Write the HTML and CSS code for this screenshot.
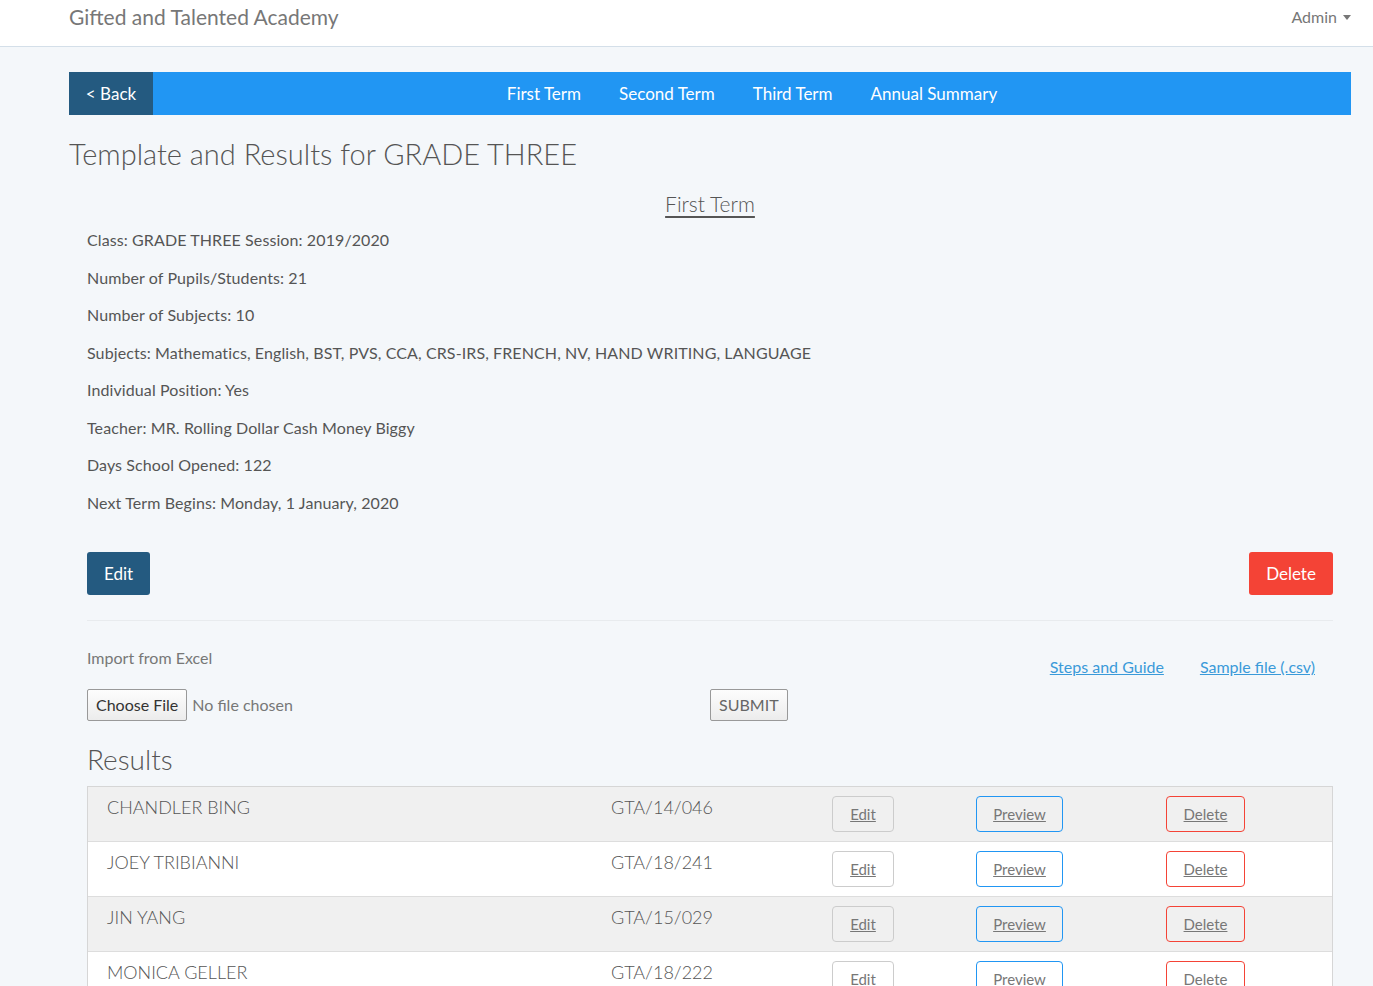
FILE: index.html
```html
<!DOCTYPE html>
<html>
<head>
<meta charset="utf-8">
<link rel="stylesheet" href="styles.css">
</head>
<body>
<header class="navbar">
  <a class="brand">Gifted and Talented Academy</a>
  <a class="user">Admin <span class="caret"></span></a>
</header>
<main class="container">
  <nav class="tabs">
    <a class="back">&lt; Back</a>
    <div class="tab-links">
      <a>First Term</a>
      <a>Second Term</a>
      <a>Third Term</a>
      <a>Annual Summary</a>
    </div>
  </nav>
  <h1 class="title">Template and Results for GRADE THREE</h1>
  <div class="panel">
    <h2 class="term">First Term</h2>
    <ul class="info">
      <li>Class: GRADE THREE Session: 2019/2020</li>
      <li>Number of Pupils/Students: 21</li>
      <li>Number of Subjects: 10</li>
      <li>Subjects: Mathematics, English, BST, PVS, CCA, CRS-IRS, FRENCH, NV, HAND WRITING, LANGUAGE</li>
      <li>Individual Position: Yes</li>
      <li>Teacher: MR. Rolling Dollar Cash Money Biggy</li>
      <li>Days School Opened: 122</li>
      <li>Next Term Begins: Monday, 1 January, 2020</li>
    </ul>
    <div class="actions">
      <button class="btn btn-primary">Edit</button>
      <button class="btn btn-danger">Delete</button>
    </div>
    <hr class="sep">
    <div class="import">
      <div class="import-left">
        <p class="import-label">Import from Excel</p>
        <div class="file-row">
          <span class="file-btn">Choose File</span>
          <span class="file-name">No file chosen</span>
        </div>
      </div>
      <div class="import-mid">
        <span class="submit">SUBMIT</span>
      </div>
      <div class="import-links">
        <a>Steps and Guide</a>
        <a>Sample file (.csv)</a>
      </div>
    </div>
    <h2 class="results-title">Results</h2>
    <div class="table">
      <div class="row alt">
        <div class="cell name">CHANDLER BING</div>
        <div class="cell id">GTA/14/046</div>
        <div class="cell"><span class="obtn obtn-edit">Edit</span></div>
        <div class="cell"><span class="obtn obtn-preview">Preview</span></div>
        <div class="cell"><span class="obtn obtn-delete">Delete</span></div>
      </div>
      <div class="row">
        <div class="cell name">JOEY TRIBIANNI</div>
        <div class="cell id">GTA/18/241</div>
        <div class="cell"><span class="obtn obtn-edit">Edit</span></div>
        <div class="cell"><span class="obtn obtn-preview">Preview</span></div>
        <div class="cell"><span class="obtn obtn-delete">Delete</span></div>
      </div>
      <div class="row alt">
        <div class="cell name">JIN YANG</div>
        <div class="cell id">GTA/15/029</div>
        <div class="cell"><span class="obtn obtn-edit">Edit</span></div>
        <div class="cell"><span class="obtn obtn-preview">Preview</span></div>
        <div class="cell"><span class="obtn obtn-delete">Delete</span></div>
      </div>
      <div class="row">
        <div class="cell name">MONICA GELLER</div>
        <div class="cell id">GTA/18/222</div>
        <div class="cell"><span class="obtn obtn-edit">Edit</span></div>
        <div class="cell"><span class="obtn obtn-preview">Preview</span></div>
        <div class="cell"><span class="obtn obtn-delete">Delete</span></div>
      </div>
    </div>
  </div>
</main>
</body>
</html>
```

FILE: styles.css
```css
* { box-sizing: border-box; }
html, body { margin: 0; padding: 0; }
body {
  background: #f4f7fa;
  font-family: "Lato", "Open Sans", sans-serif;
  color: #555;
  font-size: 16px;
  height: 986px;
  overflow: hidden;
}
a { cursor: pointer; }
.navbar {
  height: 47px;
  background: #fff;
  border-bottom: 1px solid #d4dfe9;
  display: flex;
  align-items: center;
  justify-content: space-between;
  padding: 0 22px 0 69px;
}
.brand {
  font-size: 21px;
  color: #777;
  font-weight: 400;
  margin-top: -14px;
}
.user {
  font-size: 16px;
  color: #777;
  margin-top: -14px;
  display: flex;
  align-items: center;
  gap: 6px;
}
.caret {
  display: inline-block;
  width: 0; height: 0;
  border-left: 4px solid transparent;
  border-right: 4px solid transparent;
  border-top: 5px solid #777;
  margin-top: 2px;
}
.container {
  padding: 25px 22px 0 69px;
}
.tabs {
  height: 43px;
  background: #2196f3;
  display: flex;
  align-items: stretch;
}
.back {
  width: 84px;
  background: #245a80;
  color: #fff;
  display: flex;
  align-items: center;
  justify-content: center;
  font-size: 17px;
}
.tab-links {
  flex: 1;
  display: flex;
  justify-content: center;
  align-items: center;
}
.tab-links a {
  color: #fff;
  font-size: 17px;
  padding: 0 19px;
}
.title {
  font-size: 29px;
  font-weight: 300;
  color: #555;
  margin: 22px 0 0;
  line-height: 34px;
}
.panel {
  padding: 0 18px;
}
.term {
  text-align: center;
  font-size: 21px;
  font-weight: 300;
  color: #555;
  text-decoration: underline;
  text-underline-offset: 4px;
  margin: 18px 0 0;
  line-height: 30px;
}
.info {
  list-style: none;
  margin: 10px 0 0;
  padding: 0;
}
.info li {
  font-size: 16px;
  line-height: 21px;
  margin-bottom: 16.5px;
  color: #555;
  font-weight: 400;
  letter-spacing: 0.1px;
}
.actions {
  display: flex;
  justify-content: space-between;
  margin-top: 39px;
}
.btn {
  border: none;
  border-radius: 3px;
  height: 43px;
  color: #fff;
  font-family: inherit;
  font-size: 17px;
  padding: 0 18px;
}
.btn-primary { background: #245a80; width: 63px; padding: 0; }
.btn-danger { background: #f44336; width: 84px; padding: 0; }
.sep {
  border: 0;
  border-top: 1px solid #e8ebee;
  margin: 25px 0 0;
}
.import {
  display: flex;
  margin-top: 26px;
}
.import-left { width: 623px; }
.import-label {
  margin: 0;
  color: #777;
  font-size: 16px;
  line-height: 22px;
}
.file-row {
  display: flex;
  align-items: center;
  margin-top: 20px;
}
.file-btn {
  border: 1px solid #999;
  background: linear-gradient(#fdfdfd, #ececec);
  height: 32px;
  display: flex;
  align-items: center;
  padding: 0 8px;
  color: #333;
  font-size: 16px;
  border-radius: 2px;
}
.file-name {
  margin-left: 5px;
  color: #777;
  font-size: 16px;
}
.import-mid {
  display: flex;
  align-items: flex-end;
}
.submit {
  border: 1px solid #999;
  background: linear-gradient(#fdfdfd, #ececec);
  height: 32px;
  display: flex;
  align-items: center;
  padding: 0 8px;
  color: #666;
  font-size: 16px;
  border-radius: 2px;
}
.import-links {
  flex: 1;
  display: flex;
  justify-content: flex-end;
  gap: 36px;
  padding-right: 18px;
  padding-top: 9px;
}
.import-links a {
  color: #3a9ad9;
  text-decoration: underline;
  font-size: 16px;
  line-height: 22px;
}
.results-title {
  font-size: 28px;
  font-weight: 300;
  color: #555;
  margin: 21px 0 0;
  line-height: 34px;
}
.table {
  margin-top: 10px;
  border: 1px solid #d6d6d6;
  border-bottom: 0;
}
.row {
  display: grid;
  grid-template-columns: 504px 221px 144px 190px 1fr;
  height: 55px;
  background: #fff;
  border-bottom: 1px solid #ddd;
}
.row.alt { background: #f0f0f0; }
.cell {
  padding: 9px 19px;
}
.cell.name, .cell.id {
  font-size: 18px;
  font-weight: 300;
  color: #555;
  padding-top: 9px;
}
.obtn {
  display: inline-flex;
  align-items: center;
  justify-content: center;
  height: 36px;
  border: 1px solid #ccc;
  border-radius: 4px;
  font-size: 15px;
  color: #777;
  text-decoration: underline;
  margin-top: 0;
}
.obtn-edit { width: 62px; }
.obtn-preview { width: 87px; border-color: #2196f3; }
.obtn-delete { width: 79px; border-color: #f44336; }
```
